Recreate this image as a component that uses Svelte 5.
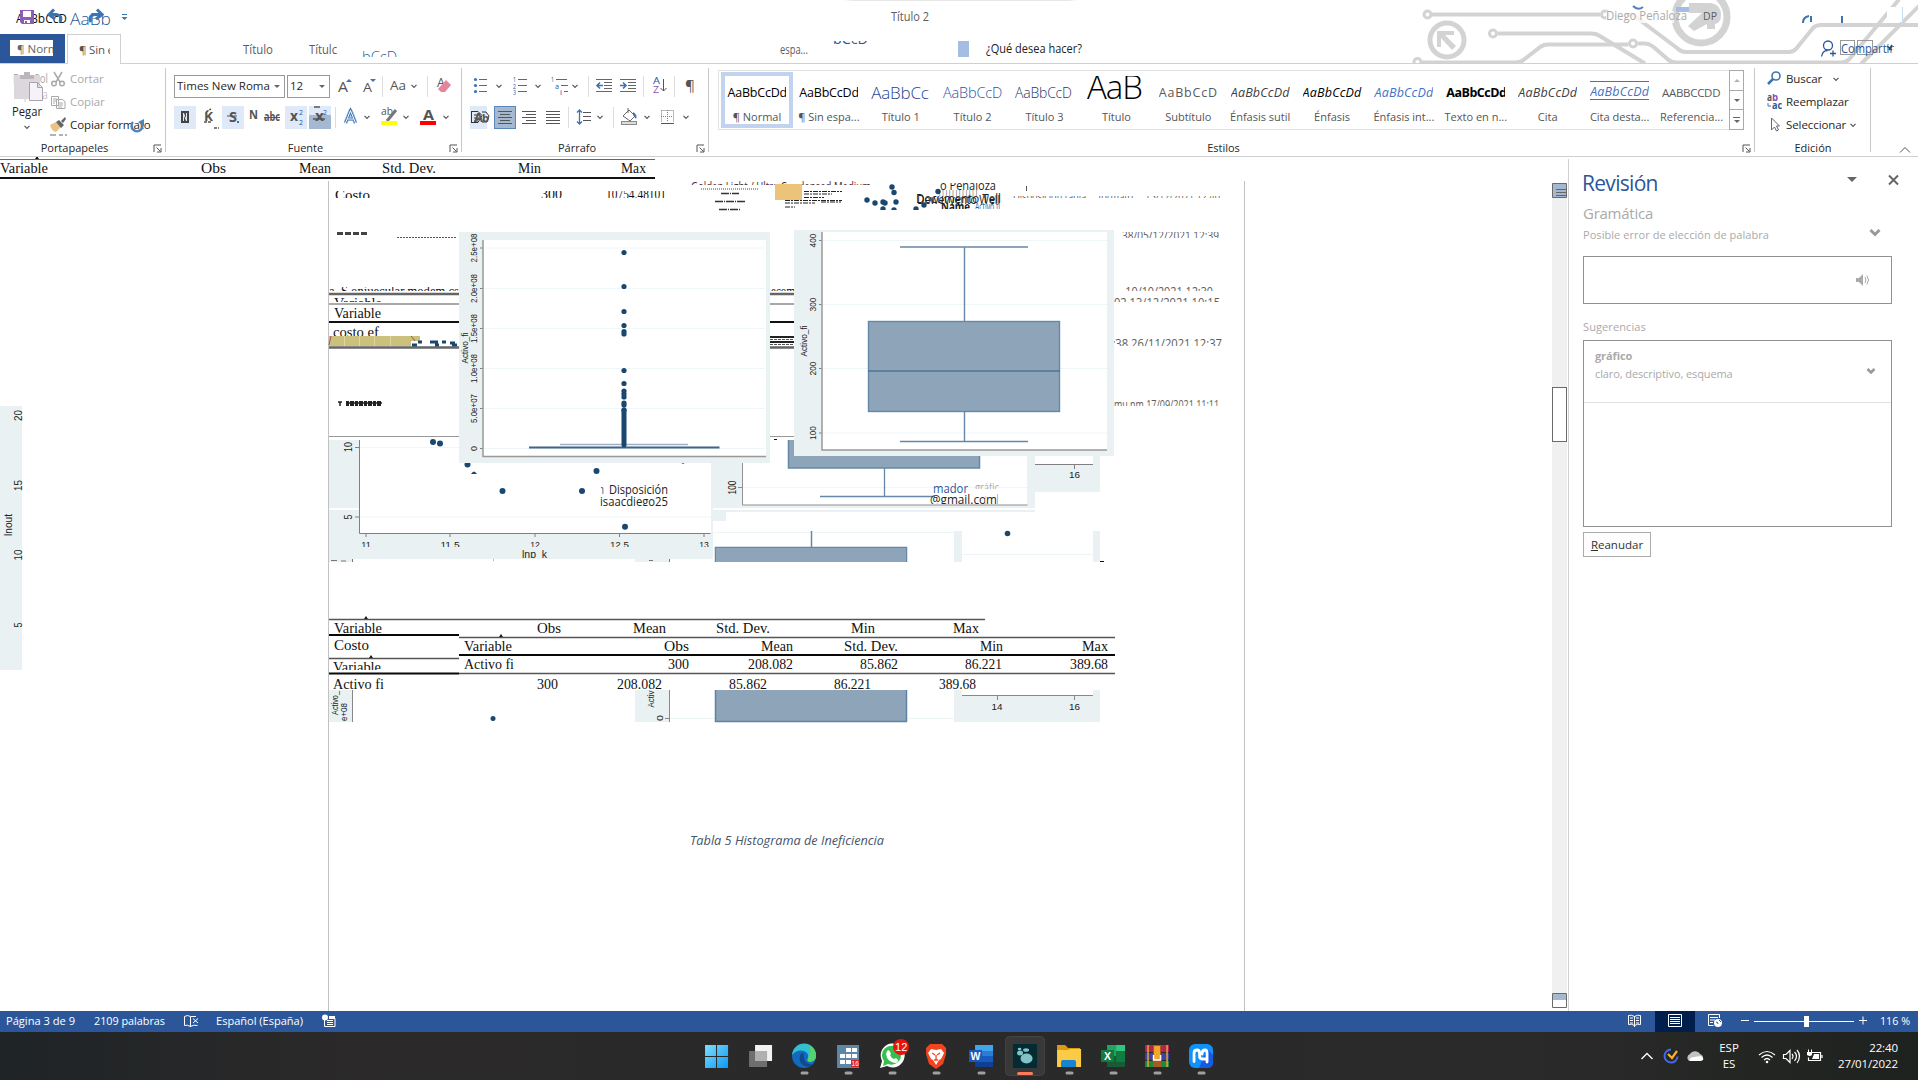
<script>
  const styles = [
    { s: 'AaBbCcDd', n: '¶ Normal', c: 'sel' },
    { s: 'AaBbCcDd', n: '¶ Sin espa...', c: '' },
    { s: 'AaBbCcD', n: 'Título 1', c: 'h1' },
    { s: 'AaBbCcDd', n: 'Título 2', c: 'h2' },
    { s: 'AaBbCcD', n: 'Título 3', c: 'h3' },
    { s: 'AaB', n: 'Título', c: 'big' },
    { s: 'AaBbCcD', n: 'Subtítulo', c: 'sub' },
    { s: 'AaBbCcDd', n: 'Énfasis sutil', c: 'it soft' },
    { s: 'AaBbCcDd', n: 'Énfasis', c: 'it' },
    { s: 'AaBbCcDd', n: 'Énfasis int...', c: 'it blue' },
    { s: 'AaBbCcDd', n: 'Texto en n...', c: 'bold' },
    { s: 'AaBbCcDd', n: 'Cita', c: 'it soft' },
    { s: 'AaBbCcDd', n: 'Cita desta...', c: 'it blue lined' },
    { s: 'AABBCCDD', n: 'Referencia...', c: 'ref' }
  ];
  // [text, x, width]
  const head0 = [['Variable', 0, 48], ['Obs', 201, 25], ['Mean', 299, 32], ['Std. Dev.', 382, 54], ['Min', 518, 23], ['Max', 621, 25]];
  const head1 = [['Variable', 334, 48], ['Obs', 537, 24], ['Mean', 633, 33], ['Std. Dev.', 716, 54], ['Min', 851, 24], ['Max', 953, 26]];
  const head2 = [['Variable', 464, 48], ['Obs', 664, 25], ['Mean', 761, 32], ['Std. Dev.', 844, 54], ['Min', 980, 23], ['Max', 1082, 26]];
  const row1 = [['Activo fi', 333, 51], ['300', 537, 21], ['208.082', 617, 45], ['85.862', 729, 38], ['86.221', 834, 37], ['389.68', 939, 37]];
  const row2 = [['Activo fi', 464, 50], ['300', 668, 21], ['208.082', 748, 45], ['85.862', 860, 38], ['86.221', 965, 37], ['389.68', 1070, 38]];
  const ticksA = [[248, '2.5e+08'], [288.5, '2.0e+08'], [328.5, '1.5e+08'], [368.5, '1.0e+08'], [408.5, '5.0e+07'], [448.5, '0']];
  const ptsA = [252.5, 286.5, 311.5, 325.5, 331.5, 334, 370.5, 383.5, 391, 394, 397, 403, 405, 410];
  const ticksB = [[240.5, '400'], [304.5, '300'], [368.5, '200'], [433, '100']];
  const ptsS = [[433, 442], [440, 443.5], [467.5, 464.5], [502.5, 491], [582, 491], [596.5, 471], [625, 526.8]];
  const ticksS = [[366, '11'], [450, '11.5'], [535, '12'], [619.5, '12.5'], [704, '13']];
  const ptsTop = [[867, 200], [875, 203], [883, 202], [885, 203], [896, 202], [894, 192.5], [892, 187], [938, 191.5], [883, 209], [894, 210], [916, 209], [924, 205]];
</script>

{#snippet T(t, x, y, w, s, c = '')}
  <text {x} {y} textLength={w} lengthAdjust="spacingAndGlyphs" font-size={s} class={c}>{t}</text>
{/snippet}
{#snippet V(t, x, y, w, s)}
  <g transform="translate({x} {y}) rotate(-90)"><text x={-w / 2} y={s * 0.36} textLength={w} lengthAdjust="spacingAndGlyphs" font-size={s} class="plot">{t}</text></g>
{/snippet}
{#snippet C(t, x, y, w, s, top, bottom, c = '')}
  <svg x={x - 2} y={top} width={w + 4} height={bottom - top} viewBox="{x - 2} {top} {w + 4} {bottom - top}">
    {@render T(t, x, y, w, s, c)}
  </svg>
{/snippet}
{#snippet chev(x, y)}
  <path d="M{x - 2.5} {y - 1.2}l2.5 2.5 2.5-2.5" fill="none" stroke="#555" stroke-width="1.2" />
{/snippet}
{#snippet launcher()}
  <svg class="launch" width="9" height="9"><path d="M1 8V1h7M3.500 3.500l4 4M8 4v4H4" fill="none" stroke="#555" /></svg>
{/snippet}
{#snippet peak(x, y)}
  <path d="M{x - 2} {y}l2-3 2 3z" fill="#111" />
{/snippet}

<div class="app">
  <header>
    <svg class="decor" width="1918" height="63" viewBox="0 0 1918 63">
      <defs><filter id="soft"><feGaussianBlur stdDeviation="3" /></filter></defs>
      <rect x="848" y="-8" width="225" height="8" fill="#999" opacity=".5" filter="url(#soft)" />
      <g fill="none" stroke="#d3d3d3" stroke-width="4">
        <circle cx="1427.500" cy="14.500" r="3.500" stroke-width="3" /><path d="M1432 14.500h168" />
        <circle cx="1605" cy="14.500" r="3.500" stroke-width="3" />
        <circle cx="1493" cy="33.500" r="3.500" stroke-width="3" /><path d="M1498 33.500h93q5 0 8 2l46 28" />
        <circle cx="1417.500" cy="62" r="3.500" stroke-width="3" /><path d="M1422 62.500h94q5 0 8-3l17-13q3-2 7-2h80" />
        <circle cx="1633" cy="43.500" r="3.500" stroke-width="3" /><path d="M1638 43.500h7q4 0 8 3l15 13q3 3 8 3h165q5 0 8-3l50-60" />
        <path d="M1625 15h8l44 33q4 4 9 4h103q4 0 7-3l17-21q3-3 8-3h101" />
        <path d="M1861 64l59-59" />
        <circle cx="1447" cy="40" r="17" stroke-width="5" />
        <circle cx="1701" cy="17" r="26" stroke-width="7" />
      </g>
      <path d="M1437 31h17v4h-9l11 11-4 4-11-12v9h-4z" fill="#d3d3d3" />
      <path d="M1689 3h22q10 2 10 12 0 8-6 9v5h-8v-5l-13 7-6-5 14-13h-13z" fill="#d3d3d3" />
      <rect x="1606" y="11" width="68" height="12" fill="#fff" opacity=".75" />
      <rect x="1887" y="7" width="15" height="15" fill="#fff" />
      <path d="M1633 6q5 5 10 1" stroke="#5080b4" stroke-width="2" fill="none" />
      <rect x="1676" y="7" width="13" height="5" fill="#a5bde3" />
      <path d="M1803 23q0-6 6-7M1811 16v6M1842 16v7" stroke="#3c74b0" stroke-width="2" fill="none" />
      <path d="M1902.500 7v16" stroke="#c4dcf2" />
      {@render T('Diego Peñaloza', 1606, 20, 81, 12, 'gray')}
      {@render T('DP', 1703, 19.5, 14, 11.5, 'mid')}

      {@render T('AaBbCcD', 16, 23, 51, 13)}
      {@render T('AaBb', 70, 25, 41, 17, 'blue thin')}
      <path d="M20 10h14v14H22l-2-2z" fill="#8a5fb5" /><path d="M23 11h8v6h-8zM24 20h6v3h-3v-2h-2v2h-1z" fill="#fff" />
      <path d="M54 9.500l-5 5 6 4.500M50 14.500h6q7 1 4 7.500" fill="none" stroke="#3c74b0" stroke-width="3" />
      <path d="M97 9.500l5 5-6 4.500M101 14.500h-6q-7 1-4 7.500" fill="none" stroke="#3c74b0" stroke-width="3" />
      <path d="M122 14.500h5" stroke="#3c74b0" /><path d="M121.500 17h6l-3 3z" fill="#3c74b0" />
      {@render T('Título 2', 891, 21, 38, 12, 'mid')}

      {@render T('Título', 243, 54, 30, 12, 'mid')}
      {@render T('Títulc', 309, 54, 28, 12, 'mid')}
      {@render C('bCcD', 362, 62, 35, 15, 51, 57, 'blue thin')}
      {@render T('espa...', 780, 54, 28, 12, 'mid')}
      {@render C('bCcD', 833, 44, 35, 15, 41, 44, 'blue')}
      <rect x="958" y="41" width="11" height="16" fill="#a5bde3" />
      {@render T('¿Qué desea hacer?', 986, 53, 96, 12, 'dark')}
      <g fill="none" stroke="#2b579a" stroke-width="1.300"><circle cx="1828" cy="45.500" r="4.500" /><path d="M1821.500 56.500q1-6 6-6M1830 53.500h6M1833 50.500v6" /></g>
      <g fill="none" stroke="#999"><rect x="1840.500" y="40.500" width="14" height="14" /><rect x="1857.500" y="40.500" width="15" height="14" /></g>
      {@render T('Compartir', 1841, 53, 53, 12, 'blue')}
      <path d="M1887 46l5 4M1892 45l-3 5" stroke="#444" stroke-width="1.600" />
    </svg>
    <nav>
      <div class="tab file"><span>¶ Norm</span></div>
      <div class="tab active"><span>¶ Sin e</span></div>
    </nav>
  </header>

  <section class="ribbon">
    <div class="group clip">
      <div class="tools">
        <svg width="50" height="70" viewBox="0 65 50 70">
          {@render T('Español', 13, 84, 35, 12, 'gray')}
          <g opacity=".7">{@render T('España', 13, 100, 35, 12, 'gray')}</g>
          <rect x="14" y="76" width="26" height="24" fill="#dcd7dc" /><path d="M20 80v-4h4v-3h6v3h4v4z" fill="#bcb6bc" />
          <path d="M29.500 83.500h8l5 5v13h-13zM37.500 83.500v5h5" fill="#f6f2f8" stroke="#aaa2b0" />
          {@render T('Pegar', 12, 117, 30, 12, 'dark')}
          {@render chev(27, 128)}
        </svg>
        <div class="stack">
          <div class="cmd off"><svg width="16" height="16"><g fill="none" stroke="#aaa" stroke-width="1.500"><path d="M4 1l6 10M12 1L6 11" /><circle cx="4" cy="12.500" r="2.300" /><circle cx="12" cy="12.500" r="2.300" /></g></svg>Cortar</div>
          <div class="cmd off"><svg width="16" height="16"><path d="M1.500 2.500h7v9h-7zM3 5h4M3 7h4M3 9h2M6.500 5.500h6l2.500 2v7H6.500zM8 9h5M8 11h5M8 13h4" fill="#fff" stroke="#aaa" /></svg>Copiar</div>
          <div class="cmd"><svg width="16" height="16"><path d="M0 8l6-3 5 5-5 5q-4 0-6-7z" fill="#ecc283" /><path d="M6 5l3-2 5 5-3 3zM11 4l4-4 1 2-3 4z" fill="#666" /></svg>Copiar formato</div>
          <svg class="redo" width="18" height="16"><path d="M4 4a5.500 5.500 0 1 0 8 0" fill="none" stroke="#4b84bd" stroke-width="2.400" /><path d="M15 1v7l-6-4z" fill="#4b84bd" /></svg>
          <svg class="slice" width="20" height="3"><path d="M1 1h6M10 1h4M16 1h2" stroke="#666" /></svg>
        </div>
      </div>
      <div class="name">Portapapeles{@render launcher()}</div>
    </div>

    <div class="group font">
      <div class="tools column">
        <div class="line">
          <div class="box wide">Times New Roma<i></i></div>
          <div class="box size">12<i></i></div>
          <svg width="50" height="24" viewBox="332 74 50 24">
            {@render T('A', 338, 92, 10, 15, 'ink')}<path d="M346 82l3-3 3 3z" fill="#3c74b0" />
            {@render T('A', 363, 92, 9, 13, 'ink')}<path d="M370 79l3 3 3-3z" fill="#3c74b0" />
          </svg>
          <svg width="79" height="24" viewBox="382 74 79 24">
            <path d="M382.500 76v21M427.500 76v21" stroke="#ddd" />
            {@render T('Aa', 390, 90, 16, 12.5, 'ink')}{@render chev(414, 86)}
            {@render T('A', 437, 87, 8, 12, 'ink')}<path d="M446 80l5 5-6 7h-4l-3-3z" fill="#e5859a" />
          </svg>
        </div>
        <div class="line">
          <svg width="161" height="24" viewBox="174 106 161 24">
            <path d="M174 106h22v23h-22zM222 106h22v23h-22zM285 106h22v23h-22zM309 106h22v9h-22z" fill="#dfe9f8" /><path d="M309 115h22v14h-22z" fill="#a5b8d1" />
            <rect x="181" y="111" width="8" height="12" fill="#444" /><path d="M183.500 121v-8l3 8v-8" stroke="#dfe9f8" fill="none" />
            {@render T('K', 204, 121, 9, 13, 'ink b')}<path d="M206 112l5-3M204 122h8M214 128h5" stroke="#555" stroke-width="1.500" stroke-dasharray="3 1" />
            {@render T('S', 229, 122, 8, 14, 'ink b')}<path d="M227 116h10" stroke="#555" /><path d="M237 122h2" stroke="#3c74b0" stroke-width="2" />
            {@render T('N', 249, 119, 9, 12, 'ink b')}
            {@render T('abc', 264, 121, 16, 12, 'ink b')}<path d="M264 117.500h16" stroke="#555" />
            {@render T('x', 290, 121, 8, 14, 'ink b')}{@render T('2', 299, 115, 4, 8, 'blue')}{@render T('2', 299, 125, 4, 8, 'blue')}
            {@render T('x', 315, 121, 9, 14, 'ink b')}{@render T('2', 323, 115, 4, 8, 'blue')}<path d="M313 119h12M314 107h6" stroke="#555" stroke-width="1.500" />
          </svg>
          <svg width="126" height="24" viewBox="335 106 126 24">
            <path d="M335.500 107v21" stroke="#ddd" />
            <path d="M345.500 123l5-12.500 5 12.500M347.500 119h6" fill="none" stroke="#9cc0e4" stroke-width="4" stroke-linejoin="round" /><path d="M345.500 123l5-12.500 5 12.500M347.500 119h6" fill="none" stroke="#3c74b0" stroke-width="2.600" /><path d="M345.500 123l5-12.500 5 12.500M347.500 119h6" fill="none" stroke="#fff" stroke-width="1" />{@render chev(367, 117)}
            {@render T('ab', 381, 115, 12, 11, 'ink')}<path d="M396 110l-9 11" stroke="#777" stroke-width="3" /><rect x="381" y="121" width="16" height="4" fill="#ff0" />{@render chev(406, 117)}
            {@render T('A', 423, 120, 11, 14, 'ink b')}<rect x="420" y="121" width="16" height="4" fill="red" />{@render chev(446, 117)}
          </svg>
        </div>
      </div>
      <div class="name">Fuente{@render launcher()}</div>
    </div>

    <div class="group para">
      <div class="tools column">
        <div class="line">
          <svg width="245" height="24" viewBox="462 74 245 24">
            <g fill="#3c74b0"><circle cx="475.500" cy="79.500" r="1.600" /><circle cx="475.500" cy="85.500" r="1.600" /><circle cx="475.500" cy="91.500" r="1.600" /></g>
            <path d="M479 79.500h8M479 85.500h8M479 91.500h8M518 79.500h9M518 85.500h9M518 91.500h9M556 79.500h11M561 85.500h7M564 91.500h4" stroke="#666" />
            {@render chev(499, 86)}{@render chev(538, 86)}{@render chev(575, 86)}
            <g class="tiny">{@render T('1', 513, 82, 3, 7)}{@render T('2', 513, 88.5, 3, 7)}{@render T('3', 513, 95, 3, 7)}{@render T('1', 551, 82, 3, 7)}{@render T('a', 555, 88.5, 4, 8)}{@render T('i', 560, 95, 2, 7)}</g>
            <path d="M588.500 76v21M643.500 76v21M674.500 76v21" stroke="#ddd" />
            <path d="M596 79.500h16M604 82.500h8M604 85.500h8M604 88.500h8M596 91.500h16M620 79.500h16M628 82.500h8M628 85.500h8M628 88.500h8M620 91.500h16" stroke="#666" />
            <path d="M603 85.500h-5m2-3l-3 3 3 3M620 85.500h5m-2-3l3 3-3 3" stroke="#3c74b0" fill="none" stroke-width="1.600" />
            {@render T('A', 653, 84, 7, 9, 'blue')}{@render T('Z', 653, 93, 6, 9, 'violet')}<path d="M663.500 79v12m-3-3l3 3 3-3" stroke="#555" fill="none" />
            {@render T('¶', 685, 91, 10, 14, 'ink')}
          </svg>
        </div>
        <div class="line">
          <svg width="245" height="24" viewBox="462 106 245 24">
            <rect x="470" y="106" width="17" height="23" fill="#dfe9f8" />
            <path d="M471.500 111v12M471 111.500h7l4 4-4 7h-7M474 115h6M474 118h6M474 121h4M482 112h4l3 4-2 6h-5" stroke="#333" fill="none" />{@render T('A', 474, 122, 9, 12, 'ink b')}{@render T('b', 482, 122, 7, 11, 'ink b')}
            <rect x="494.500" y="106.500" width="21" height="22" fill="#a5b8d1" stroke="#5a86b8" />
            <path d="M498 111.500h14M500 114.500h10M498 117.500h14M500 120.500h10M498 123.500h14M522 111.500h14M526 114.500h10M522 117.500h14M526 120.500h10M522 123.500h14M546 111.500h14M546 114.500h14M546 117.500h14M546 120.500h14M546 123.500h14M583 112.500h8M583 116.500h8M583 120.500h8" stroke="#555" />
            <path d="M568.500 107v21M613.500 107v21" stroke="#ddd" />
            <path d="M579.500 110v14m-2.500-11.500l2.500-2.500 2.500 2.500m-5 9l2.500 2.500 2.500-2.500" stroke="#3c74b0" fill="none" stroke-width="1.300" />{@render chev(600, 117)}
            <path d="M623 116l6-6 6 6-5 5zM628 108v5" fill="#fff" stroke="#666" /><path d="M633 112q5 3 3 7l-3-4z" fill="#3c74b0" /><rect x="621.500" y="121.500" width="15" height="3" fill="#ddd" stroke="#888" />{@render chev(647, 117)}
            <path d="M661.500 110.500h12v12M661.500 110.500v12M667.500 110v12M661 116.500h12" fill="none" stroke="#777" stroke-dasharray="1 1" /><path d="M661 123.500h13" stroke="#555" />{@render chev(686, 117)}
          </svg>
        </div>
      </div>
      <div class="name">Párrafo{@render launcher()}</div>
    </div>

    <div class="group styles">
      <div class="gallery">
        {#each styles as st}
          <div class="style {st.c}"><div class="sample">{st.s}</div><div class="label">{st.n}</div></div>
        {/each}
        <div class="more"><i class="up"></i><i></i><i class="bar"></i></div>
      </div>
      <div class="name">Estilos{@render launcher()}</div>
    </div>

    <div class="group edit">
      <div class="stack">
        <div class="cmd"><svg width="15" height="15"><circle cx="9" cy="5" r="4" fill="none" stroke="#3c74b0" stroke-width="1.600" /><path d="M6 8l-5 5" stroke="#3c74b0" stroke-width="2.500" /></svg>Buscar<svg class="c1" width="8" height="8">{@render chev(4, 4)}</svg></div>
        <div class="cmd"><svg width="15" height="16">{@render T('a', 0, 7, 5, 10, 'ink b')}{@render T('b', 5, 7, 6, 10, 'violet b')}{@render T('ac', 5, 14.5, 10, 10, 'blue b')}<path d="M1 9v3h3" stroke="#3c74b0" fill="none" /></svg>Reemplazar</div>
        <div class="cmd"><svg width="15" height="15"><path d="M4.500 1v12l3-3 2 4 2-1-2-4h3z" fill="#fff" stroke="#666" /></svg>Seleccionar<svg class="c2" width="8" height="8">{@render chev(4, 4)}</svg></div>
      </div>
      <div class="name">Edición</div>
    </div>
    <div class="fold"><svg width="12" height="8"><path d="M1 6.500l5-5 5 5" fill="none" stroke="#555" /></svg></div>
  </section>

  <main>
    <svg class="canvas" width="1552" height="854" viewBox="0 157 1552 854">
      <g class="serif">
        <path d="M0 159.500h655" stroke="#666" /><path d="M0 178h655" stroke="#111" stroke-width="2" />
        {@render peak(37, 159)}
        {#each head0 as [t, x, w]}{@render T(t, x, 172.5, w, 15)}{/each}
      </g>
      <path d="M328.500 181v830M1244.500 181v830" stroke="#c2c2c2" />

      <g class="serif">
        {@render C('Costo', 335, 200, 35, 15, 191, 198)}
        {@render C('300', 541, 199, 21, 15, 191, 198)}
        {@render C('10754.48101', 606, 199, 60, 15, 191, 198)}
      </g>
      {@render C('Golden Light / Ultra Condensed Medium', 691, 191, 180, 12, 181, 185, 'plum')}
      <g stroke="#333" stroke-width="1.400"><path d="M701 189h58" stroke-dasharray="1 1" opacity=".6" /><path d="M721 193.500h18M715 201.500h30M719 209.500h22" stroke-dasharray="8 1 1 1" /></g>
      <rect x="775" y="184" width="27" height="16" fill="#ecc479" />
      <path d="M804 191.500h38M804 194h28M785 200.500h57M785 203h30M785 207h10M804 197.500h20M821 202h20" stroke="#222" stroke-dasharray="5 1 2 1" />
      <g fill="#1a476f">{#each ptsTop as [x, y]}<circle cx={x} cy={y} r="2.700" />{/each}</g>
      <rect x="850" y="210" width="140" height="6" fill="#fff" />
      {@render C('o Peñaloza', 940, 190, 56, 12, 183, 190, 'dark')}
      {@render C('||||||||||||', 938, 199, 40, 12, 190, 197, 'dark')}
      {@render C('Documento Tell', 916, 203, 85, 13, 193, 204, 'dark')}
      {@render C('Dewevyento Well', 917, 204, 83, 12, 195, 204, 'dark')}
      {@render C('Name', 941, 211, 29, 12, 203, 209, 'dark b')}
      {@render C('Activo fi', 975, 211, 25, 12, 203, 209, 'blue')}
      {@render C('Disposición tabla     formato     15/12/2021 12:40', 1013, 201, 207, 12, 196, 198, 'mid')}
      <path d="M1026.500 186v5" stroke="#555" />

      <path d="M337 233.500h31" stroke="#444" stroke-width="3" stroke-dasharray="6 2" /><path d="M397 237.500h59" stroke="#555" stroke-dasharray="2 1" />
      {@render C('...38/05/12/2021 12:39', 1114, 240, 105, 12, 232, 238, 'mid')}
      <g class="serif">
        {@render C('a. S onjuecular modem cs', 329, 296, 130, 15, 287, 291)}
        {@render C('ecom', 771, 296, 24, 15, 287, 291)}
        {@render C('Variable', 334, 308, 48, 15, 298, 302)}
      </g>
      <path d="M329 294h130M770 294h24M329 347.500h130M770 347.500h24" stroke="#666" stroke-width="2.500" />
      <path d="M329 304h130M770 304h24" stroke="#aaa" stroke-width="2" />
      {@render C('... 10/10/2021 12:30', 1114, 296, 99, 12, 287, 291, 'mid')}
      {@render C('02 13/12/2021 10:15', 1114, 307, 106, 12, 298, 302, 'mid')}
      <g class="serif">{@render T('Variable', 334, 318, 47, 15)}{@render C('costo ef', 333, 337, 46, 15, 325, 336)}</g>
      <path d="M329 322h130M770 322h24" stroke="#111" stroke-width="2" />
      <path d="M770 337h24M770 342h24" stroke="#222" stroke-width="2" /><path d="M770 339.500h24M770 344.500h24" stroke="#555" stroke-dasharray="3 1" />
      <rect x="329" y="336" width="91" height="10" fill="#cbc17c" /><path d="M344.500 336v10M359.500 336v10M374.500 336v10M390.500 336v10" stroke="#ddd8a0" />
      <path d="M329 345l2-9M411 336l5 6" stroke="#a8553f" fill="none" /><path d="M411 341h48v5h-48z" fill="#fff" />
      <path d="M412 345h5M418 342h4M430 342h8M442 342h4M435 345h4M450 343h5M452 345h5" stroke="#1a476f" stroke-width="3" />
      {@render C('2:38 26/11/2021 12:37', 1106, 348, 116, 12.5, 338, 346, 'mid')}
      <rect x="1104" y="338" width="10" height="10" fill="#fff" />
      <path d="M338 402h4m-2 0v4M346 403h36" stroke="#222" stroke-width="1.500" /><path d="M346 403.500h36" stroke="#222" stroke-width="5" stroke-dasharray="3 1 4 1" />
      {@render C('mu nm 17/09/2021 11:11', 1114, 409, 105, 12, 400, 406, 'mid')}
      <path d="M329 436.500h130M770 436.500h24" stroke="#999" />

      <!-- scatter -->
      <path d="M329 440h384v119h-384z" fill="#e9f1f3" /><path d="M360 440h351v93h-351zM329 508h31v2h-31z" fill="#fff" />
      <path d="M360 447.500h351M360 517h351" stroke="#eff6f7" />
      <path d="M359.500 440v93.500h351M355 447.500h4M355 517h4" fill="none" stroke="#808080" />
      {@render V('10', 348, 447, 10, 11)}{@render V('5', 348, 517, 5, 11)}
      {#each ticksS as [x, t]}<path d="M{x} 533v4" stroke="#808080" />{@render C(t, x - t.length * 2.4, 547.5, t.length * 4.8, 9, 541, 547, 'plot')}{/each}
      {@render C('lnp_k', 522, 557.5, 25, 11.5, 546, 558, 'plot')}
      <g fill="#1a476f">{#each ptsS as [x, y]}<circle cx={x} cy={y} r="3" />{/each}<path d="M471 474q3-5 6 0zM680 462h6l-3 2z" /></g>
      {@render T('n', 598, 494, 6, 12, 'blue')}<rect x="596" y="484" width="5" height="12" fill="#fff" />
      {@render T('Disposición', 609, 494, 59, 12, 'dark')}
      {@render C('isaacdiego25', 600, 506, 68, 12, 495, 506, 'dark')}

      <!-- right fragments -->
      <path d="M1035 456h65v36h-65z" fill="#e9f1f3" /><path d="M1035 456h58v8h-58z" fill="#fff" /><path d="M1035 464.500h58M1074.500 464v5" stroke="#808080" />
      {@render T('16', 1069, 478, 11, 9.5, 'plot')}

      <!-- partial box plot -->
      <path d="M711 463h31v45h-31zM1027 456h8v52h-8zM711 510h324v2h-324zM711 512h15v9h-13v38h-2zM711 505h320v3h-320z" fill="#e9f1f3" />
      <path d="M742 487.500h285" stroke="#eff6f7" /><path d="M742.500 463v42h285M738 487.500h4" stroke="#909090" fill="none" />
      <path d="M788.500 440v28h191v-28" fill="#8ea4b9" stroke="#6588a8" stroke-width="1.500" /><path d="M884.500 468v28.500M820 496.500h115" stroke="#6588a8" stroke-width="1.300" />
      {@render V('100', 732, 487.5, 14, 10)}
      {@render T('mador', 933, 492.5, 35, 12, 'blue')}{@render C('gráfic', 975, 492, 24, 12, 483, 489, 'gray')}
      {@render C('@gmail.com', 930, 504, 67, 12, 493, 504, 'dark')}<path d="M985.500 496v8" stroke="#f3d58e" /><path d="M997.500 494v10" stroke="#9ec5ea" />

      <!-- third strip -->
      <path d="M713 532.500h241M962 554.500h131" stroke="#eef5f6" /><path d="M954 531h8v31h-8zM1093 531h7v31h-7zM329 559h23v3h-23zM635 559h34v3h-34z" fill="#e9f1f3" />
      <path d="M811.500 531v16M715.500 562v-14.500h191v14.500" fill="none" stroke="#6588a8" stroke-width="1.500" /><path d="M716 548h190v14h-190z" fill="#8ea4b9" />
      <circle cx="1007.500" cy="533.500" r="2.800" fill="#1a476f" /><path d="M1100 561.500h4M774 439.500h3" stroke="#111" />
      <path d="M331 560.500h6M341 561h5M649 560.500h4M352.500 559v3M669.500 559v3M493 560h1" stroke="#777" />

      <!-- chart A -->
      <rect x="459" y="232" width="311" height="231" fill="#e9f1f3" /><rect x="483" y="240" width="283" height="217" fill="#fff" />
      {#each ticksA as [y, t]}<path d="M484 {y}h281" stroke="#eff6f7" /><path d="M480 {y}h3" stroke="#808080" />{@render V(t, 473.5, y, t.length > 1 ? 29 : 5, 9)}{/each}
      <path d="M483 240v216.500h283" fill="none" stroke="#999" stroke-width="1.500" />
      {@render V('Activo_fi', 465, 348, 31, 9.5)}
      <path d="M560 444.500h128" stroke="#9fb1c3" stroke-width="1.500" /><path d="M529 447.500h190.500" stroke="#3f6489" stroke-width="2" />
      <path d="M624 410v35" stroke="#1a476f" stroke-width="5" stroke-linecap="round" />
      <g fill="#1a476f">{#each ptsA as y}<circle cx="624" cy={y} r="2.600" />{/each}</g>

      <!-- chart B -->
      <rect x="794" y="230" width="320" height="226" fill="#e9f1f3" /><rect x="822" y="232" width="285" height="218" fill="#fff" />
      {#each ticksB as [y, t]}<path d="M823 {y}h284" stroke="#eff6f7" /><path d="M819 {y}h3" stroke="#808080" />{@render V(t, 812.5, y, 14, 9)}{/each}
      <path d="M822 232v218h285" fill="none" stroke="#999" stroke-width="1.500" />
      {@render V('Activo_fi', 803.5, 341, 31, 9.5)}
      <g stroke="#6588a8" stroke-width="1.400" fill="none"><path d="M900 247h128M964.500 247v74M964.500 412v29.500M900 441.500h128" /><rect x="868.500" y="321.500" width="191" height="90" fill="#8ea4b9" /><path d="M868 371h192" stroke="#4f7599" /></g>

      <!-- tables -->
      <g class="serif">
        {@render peak(366, 619)}{@render peak(371, 658)}{@render peak(501, 637)}
        <path d="M329 619.500h656M459 637.500h656M459 673.500h656M329 658.500h130" stroke="#555" stroke-width="1.500" />
        <path d="M329 635h130M459 655h656M329 673.500h130" stroke="#080808" stroke-width="2" />
        {#each head1 as [t, x, w]}{@render T(t, x, 633, w, 15)}{/each}
        {#each head2 as [t, x, w]}{@render T(t, x, 651, w, 15)}{/each}
        {#each row2 as [t, x, w]}{@render T(t, x, 669, w, 15)}{/each}
        {@render T('Costo', 334, 650, 35, 15)}
        {@render C('Variable', 333, 672, 48, 15, 661, 670)}
        {#each row1 as [t, x, w]}{@render C(t, x, 688.5, w, 15, 677, 690)}{/each}
      </g>

      <!-- last strip -->
      <path d="M329 690h23v32h-23zM635 690h34v32h-34zM954 690h146v32h-146z" fill="#e9f1f3" /><path d="M962 690h131v5h-131z" fill="#fff" />
      <path d="M352.500 690v32M669.500 690v32M665 718.500h4M962 695.500h131M997.500 695v5M1074.500 695v5" stroke="#888" />
      <path d="M670 718.500h284" stroke="#eef5f6" />
      <rect x="715.500" y="690" width="191" height="32" fill="#8ea4b9" /><path d="M715.500 690v31.500h191V690" stroke="#5f82a4" stroke-width="1.500" fill="none" />
      {@render V('Activo_', 334.5, 703, 24, 9)}{@render V('e+08', 343.500, 712, 18, 9)}{@render V('Activ', 650.5, 699, 17, 9)}{@render V('0', 659.5, 718, 6, 9)}
      {@render T('14', 991.5, 710, 11, 9.5, 'plot')}{@render T('16', 1069, 710, 11, 9.5, 'plot')}
      <circle cx="493" cy="718.500" r="2.500" fill="#1a476f" />
      {@render T('Tabla 5 Histograma de Ineficiencia', 690, 845, 194, 12.5, 'caption')}

      <!-- left axis strip -->
      <rect x="0" y="406" width="22" height="264" fill="#e9f1f3" />
      {@render V('20', 18, 415.5, 11, 10.5)}{@render V('15', 18, 485.5, 11, 10.5)}{@render V('10', 18, 555, 11, 10.5)}{@render V('5', 18, 625, 5, 10.5)}{@render V('lnout', 8, 525, 22, 11)}
    </svg>

    <div class="scroll">
      <svg width="15" height="15"><path d="M.5.500h14v14H.5z" fill="#a5b8d1" stroke="#6a6a6a" /><path d="M4 6.500h10M4 9.500h10M4 12.500h10" stroke="#666" /></svg>
      <div class="thumb"></div>
      <svg width="15" height="15"><path d="M.5.500h14v14H.5z" fill="#fff" stroke="#6a6a6a" /><path d="M1 1h13v6H1z" fill="#a5b8d1" /></svg>
    </div>

    <aside>
      <div class="ptitle"><h1>Revisión</h1>
        <svg width="60" height="20"><path d="M5 9h10l-5 5z" fill="#666" /><path d="M47 7.500l9 9M56 7.500l-9 9" stroke="#666" stroke-width="2" /></svg>
      </div>
      <h2>Gramática</h2>
      <div class="issue">Posible error de elección de palabra<svg width="12" height="10"><path d="M1.500 1l4.500 4.500L10.500 1" fill="none" stroke="#999" stroke-width="3" /></svg></div>
      <div class="word"><svg width="14" height="12"><path d="M0 4h3l4-4v12L3 8H0z" fill="#aaa" /><path d="M9 3q2 3 0 6M11 1.500q3 4.500 0 9" fill="none" stroke="#aaa" /></svg></div>
      <div class="sug">Sugerencias</div>
      <div class="list"><div class="item"><div><b>gráfico</b><span>claro, descriptivo, esquema</span></div><svg width="10" height="8"><path d="M1.500 1L5 4.500 8.500 1" fill="none" stroke="#999" stroke-width="2.600" /></svg></div></div>
      <button><u>R</u>eanudar</button>
    </aside>
  </main>

  <div class="status">
    <svg width="345" height="21" viewBox="0 1011 345 21">
      {@render T('Página 3 de 9', 6, 1025, 69, 11, 'w')}{@render T('2109 palabras', 94, 1025, 71, 11, 'w')}{@render T('Español (España)', 216, 1025, 87, 11, 'w')}
      <path d="M196 1016.500h-5.500v0q-3-2-6 0v9q3-1 6 1 3-2 7-1M190.500 1017v10M193 1018.500l5 4.500M198 1018.500l-5 4.500" fill="none" stroke="#fff" />
      <path d="M329 1016h6v3h-6z" fill="#fff" /><path d="M324.500 1019v7.500h10.500v-8M327 1020.500h6M327 1022.500h6M327 1024.500h6" fill="none" stroke="#fff" /><circle cx="325" cy="1017.500" r="3" fill="#fff" />
    </svg>
    <svg width="305" height="21" viewBox="1613 1011 305 21">
      <path d="M1628.500 1015.500q3-1 6 1 3-2 6-1v9q-3-1-6 1-3-2-6-1zM1634.500 1016v11M1630 1018h3M1630 1020.500h3M1630 1023h3M1636 1018h3M1636 1020.500h3M1636 1023h3" fill="none" stroke="#fff" />
      <rect x="1655" y="1011" width="40" height="21" fill="#001f4d" /><path d="M1668.500 1014.500h13v12h-13zM1670 1017.500h10M1670 1019.500h10M1670 1021.500h10M1670 1023.500h10" fill="none" stroke="#fff" />
      <path d="M1719.500 1018v-3.500h-11v11h5M1710 1017.500h8M1710 1020h5M1710 1022.500h3" fill="none" stroke="#fff" /><circle cx="1718" cy="1023" r="4" fill="#fff" /><path d="M1716 1022q2 0 2 2M1719 1020l2 2" stroke="#2b579a" fill="none" />
      <path d="M1741 1020.500h8M1754 1021.500h100M1859 1020.500h8M1863 1016.500v8" stroke="#fff" fill="none" /><rect x="1804" y="1016" width="5" height="11" fill="#fff" />
      {@render T('116 %', 1880, 1025, 30, 11.5, 'w')}
    </svg>
  </div>

  <footer>
    <div class="apps">
      <svg viewBox="0 0 44 48"><defs><linearGradient id="wn" x2="1" y2="1"><stop stop-color="#7fe0fb" /><stop offset="1" stop-color="#0a97f5" /></linearGradient></defs><path d="M11 13h11v11H11zM23 13h11v11H23zM11 25h11v11H11zM23 25h11v11H23z" fill="url(#wn)" /></svg>
      <svg viewBox="0 0 44 48"><path d="M17 13h17v16H17z" fill="#f2f2f2" /><path d="M11 19h18v16H11z" fill="#777" opacity=".9" /><path d="M17 19h12v10H17z" fill="#b0b0b0" /></svg>
      <svg viewBox="0 0 44 48"><circle cx="22" cy="24" r="12" fill="#1269bd" /><path d="M10 23a12 12 0 0 1 24 1q0 5-6 6-4-1-2-4 1-5-4-7-7-2-12 4z" fill="#33bfd2" /><path d="M27 13q7 4 7 11 0 5-6 6-4-1-2-4 4-6 1-13z" fill="#55d36c" /><path d="M18 23q-2 11 9 12l4-3q-8 1-9-6-1-4 0-5-3 0-4 2z" fill="#114a8b" /><path d="M20 45h5" class="dot" /></svg>
      <svg viewBox="0 0 44 48"><path d="M11 13h22v23H11z" fill="#5c87a6" /><path d="M20 16h5v4h-5zM26 16h5v4h-5zM14 22h5v4h-5zM20 22h5v4h-5zM26 22h5v4h-5zM14 28h5v4h-5zM20 28h5v4h-5z" fill="#fff" /><path d="M25 28h8v7h-8z" fill="#d8242f" /><text x="25.500" y="34" font-size="6.500" class="sans">16</text><path d="M20 45h5" class="dot" /></svg>
      <svg viewBox="0 0 44 48"><path d="M10 36l2-7a12 12 0 1 1 5 5z" fill="#fff" /><path d="M13 34l1-5a9.500 9.500 0 1 1 4 3z" fill="#36bf50" /><path d="M17 19q2-2 3 1l1 2-1 1q1 3 4 4l2-1 2 2q0 3-3 3-8-1-9-9z" fill="#fff" /><circle cx="31" cy="15" r="8" fill="#ea1111" /><text x="25" y="19" font-size="11" class="sans">12</text><path d="M20 45h5" class="dot" /></svg>
      <svg viewBox="0 0 44 48"><path d="M16 12h12l4 4v6l-3 10-7 5-7-5-3-10v-6z" fill="#f4431f" /><path d="M17 17l5 1 5-1 3 4-3 6-2 1-3 5-3-5-2-1-3-6z" fill="#fff" /><path d="M18 21l3 2M26 21l-3 2M22 23v5M20 28h4" stroke="#f4431f" stroke-width="1.300" /><path d="M20 45h5" class="dot" /></svg>
      <svg viewBox="0 0 44 48"><path d="M16 13h18v6H16z" fill="#41a5ee" /><path d="M16 19h18v5H16z" fill="#2b7cd3" /><path d="M16 24h18v6H16z" fill="#185abd" /><path d="M16 30h18v5H16z" fill="#103f91" /><path d="M10 18h13v12H10z" fill="#185abd" /><text x="11.500" y="28" font-size="10.500" class="sans b">W</text><path d="M20 45h5" class="dot" /></svg>
      <svg viewBox="0 0 44 48"><rect x="2.500" y="4.500" width="39" height="39" rx="4" fill="#383838" stroke="#444" /><path d="M10 12h24v24H10z" fill="#042b34" /><g fill="#82c4c6"><ellipse cx="23.500" cy="26.500" rx="6" ry="5" /><ellipse cx="17" cy="21" rx="3" ry="2.500" /><ellipse cx="16.500" cy="17" rx="1.800" ry="1.300" /><ellipse cx="23" cy="18" rx="3" ry="1.800" /></g><rect x="14" y="40" width="16" height="3" rx="1.500" fill="#f97c5d" /></svg>
      <svg viewBox="0 0 44 48"><path d="M10 13h8l3 3h12v5H10z" fill="#d89b12" /><path d="M10 18h11l2-1h11v18H10z" fill="#fccb45" /><path d="M14 35v-5q0-2 2-2h11q2 0 2 2v5z" fill="#1683d3" /><path d="M20 45h5" class="dot" /></svg>
      <svg viewBox="0 0 44 48"><path d="M16 13h9v11h-9z" fill="#21a366" /><path d="M25 13h9v6h-9z" fill="#33c481" /><path d="M25 19h9v11h-9z" fill="#107c41" /><path d="M16 24h9v11h9v-5H16z" fill="#185c37" /><path d="M16 30h18v5H16z" fill="#185c37" /><path d="M10 18h13v12H10z" fill="#107c41" /><text x="13" y="28" font-size="10.500" class="sans b">X</text><path d="M20 45h5" class="dot" /></svg>
      <svg viewBox="0 0 44 48"><path d="M10 13h24v7H10z" fill="#b52350" /><path d="M10 21h24v7H10z" fill="#3d42a8" /><path d="M10 29h24v6H10z" fill="#1f8a3d" /><path d="M13 13v22M32 13v22" stroke="#e0a53a" stroke-width="1.500" /><path d="M18 13h8v22h-8z" fill="#a85a25" /><path d="M19 14h6v14h-6z" fill="#f2a62c" /><path d="M18.500 23v5h7v-5" stroke="#fff" stroke-width="1.500" fill="none" /><path d="M20 45h5" class="dot" /></svg>
      <svg viewBox="0 0 44 48"><rect x="10" y="12" width="24" height="24" rx="6" fill="#1192fb" /><path d="M28 17l6 6v8q0 5-6 5h-8z" fill="#1759e0" /><path d="M15 29.500V21q0-3 3-3 2.500 0 2.500 3v3q0 3 3 3h4.500M23 22q0-4 3-4 2 0 2 3v9" fill="none" stroke="#fff" stroke-width="2.800" stroke-linecap="round" /><path d="M20 45h5" class="dot" /></svg>
    </div>
    <div class="tray">
      <svg width="68" height="48" viewBox="1638 1032 68 48"><path d="M1641.500 1059l5.500-5.500 5.500 5.500" fill="none" stroke="#fff" stroke-width="1.300" /><path d="M1671 1049.500a6.500 6.500 0 1 0 6.500 7" fill="none" stroke="#4668e8" stroke-width="2" /><path d="M1668 1054l4 4 5-7" fill="none" stroke="#ffb01f" stroke-width="2.200" /><path d="M1689 1061a4 4 0 0 1 1-7 6 6 0 0 1 10 0q3 1 3 4 0 3-3 3z" fill="#c2c2c2" /><path d="M1690 1061q-1-4 4-4l7-1q3 2 2 4l-3 1z" fill="#fff" /></svg>
      <div class="lang"><span>ESP</span><span>ES</span></div>
      <svg width="70" height="48" viewBox="1756 1032 70 48"><g fill="none" stroke="#fff" stroke-width="1.200"><path d="M1759 1055q8-7 16 0M1761.500 1057.500q5.500-5 11 0M1764 1060q3-3 6 0" /><path d="M1783.500 1054.500h2.500l4-4v12l-4-4h-2.500zM1792 1054q2 2 0 5M1794.500 1052q4 4 0 9M1797 1050q5 6 0 13" /><path d="M1812 1052.500h8.500v8h-12v-3M1822 1055v3" /></g><path d="M1814 1054h5v5h-7zM1807 1052h5v3q-2 2-5 0zM1808 1049.500h1v3h-1zM1811 1049.500h1v3h-1z" fill="#fff" /><circle cx="1767" cy="1062" r="1.300" fill="#fff" /></svg>
      <div class="clock"><span>22:40</span><span>27/01/2022</span></div>
    </div>
  </footer>
</div>

<style>
  :global(body) { background: #fff; }
  .app { width: 1918px; height: 1080px; overflow: hidden; display: flex; flex-direction: column; font: 11px/16px "Open Sans", "Noto Sans", sans-serif; color: #262626; background: #fff; }
  svg { flex: none; display: block; }
  text { fill: #111; white-space: pre; }
  .gray { fill: #aaa; }
  .mid { fill: #5c5c5c; }
  .dark { fill: #222; }
  .ink { fill: #555; }
  .blue, .tiny text { fill: #2b579a; }
  .violet { fill: #8a4fb0; }
  .plum { fill: #4b2333; }
  .w { fill: #fff; }
  .b { font-weight: 700; }
  .thin { font-weight: 300; }
  .plot { font-family: "Liberation Sans", sans-serif; fill: #222; }
  .serif text { font-family: "Liberation Serif", serif; fill: #111; }
  .caption { font-style: italic; fill: #44546a; }

  header { position: relative; height: 63px; border-bottom: 1px solid #d0d0d0; display: flex; align-items: flex-end; flex: none; }
  .decor { position: absolute; left: 0; top: 0; }
  nav { display: flex; gap: 2px; position: relative; margin-bottom: -1px; }
  .tab { height: 29px; box-sizing: border-box; font-size: 11.500px; color: #555; }
  .file { width: 65px; background: #2b579a; padding: 6px 10px 0; }
  .file span { display: block; width: 36px; padding-left: 7px; height: 16px; background: #fff; overflow: hidden; white-space: nowrap; color: #666; line-height: 18px; }
  .active { width: 54px; border: 1px solid #d0d0d0; border-bottom: 0; background: #fff; padding: 7px 0 0 11px; height: 30px; }
  .active span { display: block; width: 31px; overflow: hidden; white-space: nowrap; letter-spacing: -.2px; }

  .ribbon { height: 92px; flex: none; display: flex; border-bottom: 1px solid #d0d0d0; }
  .group { display: flex; flex-direction: column; position: relative; box-sizing: border-box; flex: none; }
  .group::after { content: ""; position: absolute; right: 0; top: 4px; height: 84px; width: 1px; background: #c8c8c8; }
  .clip { width: 166px; }
  .font { width: 296px; }
  .para { width: 247px; }
  .styles { width: 1046px; }
  .edit { width: 116px; }
  .tools { display: flex; flex: 1; }
  .column { flex-direction: column; }
  .name { margin-top: auto; height: 16px; text-align: center; position: relative; padding-right: 17px; line-height: 16px; }
  .edit .name { padding: 0; }
  .launch { position: absolute; right: 4px; top: 4px; }
  .stack { display: flex; flex-direction: column; position: relative; padding-top: 3px; }
  .cmd { display: flex; align-items: center; height: 23px; gap: 4px; font-size: 11.500px; white-space: nowrap; letter-spacing: -.08px; }
  .off { color: #aaa; }
  .redo { position: absolute; left: 79px; top: 54px; }
  .slice { position: absolute; left: -1px; top: 70px; }
  .line { display: flex; height: 24px; margin-left: 8px; margin-top: 10px; align-items: center; }
  .line + .line { margin-top: 8px; }
  .para .line { margin-left: 0; }
  .box { height: 23px; box-sizing: border-box; border: 1px solid #999; display: flex; align-items: center; justify-content: space-between; padding: 0 4px 0 2px; margin-right: 2px; font-size: 11.500px; white-space: nowrap; }
  .wide { width: 111px; }
  .size { width: 43px; }
  .box i, .more i::before { border: 3px solid transparent; border-top-color: #666; border-bottom: 0; width: 0; height: 0; }

  .gallery { margin: 6px 0 0 9px; width: 1026px; height: 60px; box-sizing: border-box; border: 1px solid #e1e1e1; display: flex; padding-left: 2px; }
  .style { width: 71.900px; flex: none; box-sizing: border-box; border: 4px solid transparent; height: 56px; margin-top: 1px; display: flex; flex-direction: column; align-items: center; }
  .sel { border-color: #c1d3ef; }
  .sample { width: 59px; height: 28px; overflow: hidden; white-space: nowrap; font-size: 12.500px; line-height: 33px; letter-spacing: -.2px; color: #000; }
  .label { line-height: 26px; white-space: nowrap; color: #555; height: 20px; margin-top: 1px; }
  .h1 .sample { font-size: 17px; color: #1f4690; font-weight: 300; }
  .h2 .sample { font-size: 14.500px; color: #1f56a5; font-weight: 300; }
  .h3 .sample { font-size: 14px; color: #1f3763; font-weight: 300; }
  .big .sample { font-size: 33px; line-height: 21px; font-weight: 300; letter-spacing: -1px; height: 24px; margin: 0 0 4px; }
  .sub .sample { color: #5a5a5a; letter-spacing: .8px; }
  .it .sample { font-style: italic; letter-spacing: .2px; }
  .soft .sample { color: #404040; }
  .blue .sample { color: #4472c4; }
  .bold .sample { font-weight: 700; letter-spacing: -.5px; }
  .lined .sample { border-top: 1px solid #4472c4; border-bottom: 1px solid #4472c4; height: 18px; line-height: 19px; margin: 5px 0 3px; }
  .ref .sample { color: #5a5a5a; letter-spacing: -.3px; font-size: 11.500px; }
  .more { margin: -1px -1px 0 auto; width: 15px; height: 60px; display: flex; flex-direction: column; flex: none; }
  .more i { flex: 1; border: 1px solid #aaa; margin-bottom: -1px; display: flex; align-items: center; justify-content: center; flex-direction: column; }
  .more i:last-child { margin: 0; }
  .more i::before { content: ""; }
  .more .up::before { transform: rotate(180deg); opacity: .5; }
  .more .bar::after { content: ""; order: -1; width: 7px; height: 1px; background: #666; margin-bottom: 2px; }
  .edit .stack { padding-left: 12px; }
  .c1 { margin-left: 6px; }
  .c2 { margin-left: -1px; }
  .fold { flex: 1; display: flex; align-items: flex-end; justify-content: flex-end; padding: 0 7px 2px 0; }

  main { flex: 1; display: flex; min-height: 0; }
  .scroll { width: 15px; margin-top: 26px; height: 825px; background: #f0f0f0; display: flex; flex-direction: column; flex: none; margin-right: 1px; }
  .thumb { box-sizing: border-box; height: 55px; border: 1px solid #6a6a6a; background: #fff; margin: 189px 0 auto; }
  aside { flex: 1; border-left: 1px solid #d0d0d0; margin-top: 2px; padding: 9px 26px 0 14px; display: flex; flex-direction: column; color: #aaa; letter-spacing: .2px; }
  .ptitle { display: flex; justify-content: space-between; margin-right: -10px; height: 33px; align-items: flex-start; }
  h1 { margin: 0; font-size: 21px; line-height: 30px; font-weight: 400; color: #2b579a; letter-spacing: -.7px; margin-left: -1px; }
  h2 { margin: 0; font-size: 15px; line-height: 24px; font-weight: 400; letter-spacing: -.25px; }
  .issue { display: flex; justify-content: space-between; padding-right: 11px; height: 31px; line-height: 19px; letter-spacing: .05px; }
  .issue svg { margin-top: 4px; }
  .word { box-sizing: border-box; height: 48px; border: 1px solid #919191; display: flex; align-items: center; justify-content: flex-end; padding-right: 21px; }
  .sug { line-height: 16px; margin: 15px 0 5px; letter-spacing: .1px; }
  .list { box-sizing: border-box; height: 187px; border: 1px solid #919191; }
  .item { height: 61px; border-bottom: 1px solid #e1e1e1; display: flex; align-items: center; justify-content: space-between; padding: 0 15px 0 11px; }
  .item div { display: flex; flex-direction: column; line-height: 18px; margin-top: -14px; letter-spacing: -.1px; }
  button { margin-top: 5px; width: 68px; height: 25px; border: 1px solid #ababab; background: #fdfdfd; font: 11.500px "Open Sans", sans-serif; color: #333; padding: 0; }

  .status { height: 21px; flex: none; background: #2b579a; display: flex; justify-content: space-between; }
  footer { height: 48px; flex: none; background: linear-gradient(90deg, #1f2427, #2b2929 18%, #2a2a2a 80%, #1e221e); display: flex; justify-content: space-between; }
  .apps { display: flex; margin-left: 694px; }
  .apps svg { width: 44.100px; height: 48px; }
  .sans { fill: #fff; font-family: "Liberation Sans", sans-serif; }
  .dot { transform: translateY(-4px); stroke: #a0a0a0; stroke-width: 3; stroke-linecap: round; fill: none; }
  .tray { display: flex; color: #fff; font-size: 11.500px; align-items: center; }
  .lang, .clock { display: flex; flex-direction: column; }
  .lang { width: 46px; align-items: center; margin-right: 4px; }
  .clock { width: 72px; align-items: flex-end; margin-right: 20px; letter-spacing: -.1px; }
</style>
